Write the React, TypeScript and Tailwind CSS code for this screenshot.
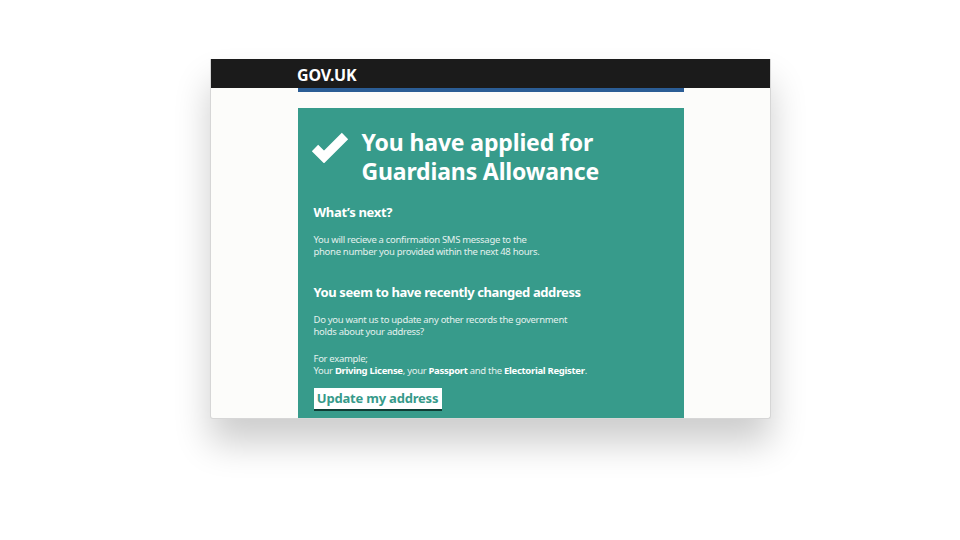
import React from "react";

export default function App() {
  return (
    <div
      className="w-[960px] h-[540px] bg-white pl-[210px] pt-[59px]"
      style={{ fontFamily: '"Noto Sans", "Liberation Sans", sans-serif' }}
    >
      <div className="w-[561px] h-[360px] overflow-hidden rounded-b-[3px] border border-t-0 border-[#d6d6d6] bg-[#fcfcfa] shadow-[0_24px_36px_rgba(0,0,0,0.2)] flex flex-col">
        <div className="h-[29px] shrink-0 bg-[#1b1b1b] pl-[86px] pt-[2px] flex items-center">
          <span className="text-[16px] font-bold leading-none text-white tracking-[-0.2px]">GOV.UK</span>
        </div>
        <div className="mx-auto w-[386px] flex-1 flex flex-col">
          <div className="h-[4px] bg-[#2b5d95]" />
          <div className="mt-[16px] flex-1 bg-[#379b8b] px-[16px] pt-[20px] text-white">
            <div className="flex items-start">
              <svg width="38" height="32" viewBox="0 0 38 32" className="mt-[3px] -ml-[3px] shrink-0">
                <polyline points="4,17 13,26 34,5" fill="none" stroke="#ffffff" strokeWidth="9" strokeLinejoin="miter" />
              </svg>
              <h1 className="ml-[13px] text-[23px] leading-[29px] font-bold tracking-[-0.15px]">
                You have applied for
                <br />
                Guardians Allowance
              </h1>
            </div>
            <h2 className="mt-[16px] text-[13px] leading-[20px] font-bold tracking-[-0.3px]">What’s next?</h2>
            <p className="mt-[12px] text-[9.5px] leading-[12px] tracking-[-0.3px] text-[#e4f1ee]">
              You will recieve a confirmation SMS message to the
              <br />
              phone number you provided within the next 48 hours.
            </p>
            <h2 className="mt-[24px] text-[13px] leading-[20px] font-bold tracking-[-0.4px]">
              You seem to have recently changed address
            </h2>
            <p className="mt-[12px] text-[9.5px] leading-[12px] tracking-[-0.3px] text-[#e4f1ee]">
              Do you want us to update any other records the government
              <br />
              holds about your address?
            </p>
            <p className="mt-[15px] text-[9.5px] leading-[12px] tracking-[-0.3px] text-[#e4f1ee]">
              For example;
              <br />
              Your <b className="text-white">Driving License</b>, your{" "}
              <b className="text-white">Passport</b> and the{" "}
              <b className="text-white">Electorial Register</b>.
            </p>
            <button className="mt-[11px] h-[21px] w-[128px] whitespace-nowrap bg-white text-[13px] font-bold leading-[21px] tracking-[-0.2px] text-[#369a8a] shadow-[0_2px_0_#0e3d35]">
              Update my address
            </button>
          </div>
        </div>
      </div>
    </div>
  );
}
